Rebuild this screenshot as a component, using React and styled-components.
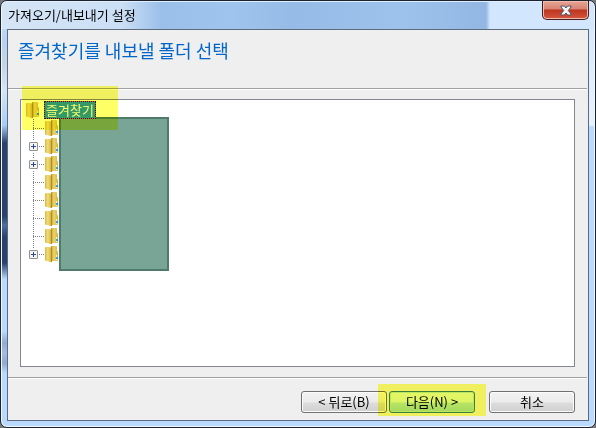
import styled, { createGlobalStyle } from "styled-components";

const GlobalStyle = createGlobalStyle`
  * {
    box-sizing: border-box;
  }
  body {
    margin: 0;
    background: #77777c;
    font-family: "Noto Sans CJK KR", "Liberation Sans", sans-serif;
    font-size: 12px;
    color: #000;
  }
`;

const Window = styled.div`
  display: flex;
  flex-direction: column;
  min-height: 100vh;
  padding: 0 6px 6px;
  border: 1px solid #1d2230;
  border-radius: 7px;
  box-shadow: inset 0 0 0 1px #f0f8ff;
  background:
    linear-gradient(
        #cfe3fa 0,
        #b5d3f5 40px,
        #c6d3e4 62px,
        #d5e4f6 90px,
        #a9cdf6 124px,
        #27426e 142px,
        #27426e 215px,
        #4f6f9e 224px,
        #27426e 236px,
        #27426e 262px,
        #b9dafd 278px,
        #b9dafd 330px,
        #8fabd0 342px,
        #a2bfe2 352px,
        #8fabd0 362px,
        #b9dafd 372px
      )
      left / 6px 100% no-repeat,
    linear-gradient(#d2e7fd 0, #e8f2fe 124px, #b9dafd 126px) right / 6px 100%
      no-repeat,
    #b9dafd;
`;

const TitleBar = styled.header`
  display: flex;
  justify-content: space-between;
  align-items: flex-start;
  height: 28px;
  margin: 0 -5px;
  padding-left: 6px;
  background: linear-gradient(
    90deg,
    #d5e5f6 0,
    #cbdff5 120px,
    #9abfe9 160px,
    #9fc5ee 230px,
    #96bbe6 290px,
    #9dc3ed 400px,
    #93b7e2 484px,
    #d2e7fd 488px
  );
  border-top: 1px solid #e2effd;
  border-radius: 6px 6px 0 0;
`;

const Title = styled.h1`
  margin: 0;
  font-size: 13px;
  font-weight: normal;
  line-height: 26px;
`;

const CloseButton = styled.button`
  display: flex;
  justify-content: center;
  align-items: center;
  width: 47px;
  height: 19px;
  margin: -1px 5px 0 0;
  padding: 0;
  border: 1px solid #481d20;
  border-top: 0;
  border-radius: 0 0 5px 5px;
  box-shadow: inset 0 0 0 1px #efbcae;
  background: linear-gradient(#e6a594 0, #d98373 8px, #bd3420 9px, #d4573f 100%);
`;

const Dialog = styled.main`
  flex: 1;
  display: flex;
  flex-direction: column;
  border: 1px solid #5c6b7e;
  background: #efefef;
`;

const Heading = styled.h2`
  height: 59px;
  margin: 0 1px 0 0;
  padding-left: 10px;
  border-bottom: 1px solid #a0a0a0;
  box-shadow: 0 1px #fff;
  color: #0066cc;
  font-size: 18px;
  font-weight: normal;
  line-height: 40px;
`;

const TreeBox = styled.div`
  position: relative;
  flex: 1;
  margin: 10px 13px 10px 12px;
  padding-top: 1px;
  border: 1px solid #828790;
  background: #fff;
`;

const Tree = styled.ul`
  margin: 0;
  padding: 0;
  list-style: none;
`;

const Row = styled.div`
  display: flex;
  align-items: center;
  height: 18px;
  padding-left: ${(props) => (props.$root ? "5px" : "0")};
  gap: ${(props) => (props.$root ? "5px" : "0")};
`;

const Branch = styled.span`
  display: flex;
  align-items: center;
  width: 24px;
  height: 18px;
  padding-left: 8px;
  background:
    repeating-linear-gradient(#808080 0 1px, transparent 1px 2px) 12px 0 / 1px
      ${(props) => (props.$last ? "9px" : "18px")} no-repeat,
    repeating-linear-gradient(90deg, #808080 0 1px, transparent 1px 2px) 12px
      9px / 12px 1px no-repeat;
`;

const Expander = styled.button`
  display: flex;
  width: 9px;
  height: 9px;
  padding: 0;
  border: 1px solid #919191;
  border-radius: 1px;
  background: #f4f4f4;
  box-shadow: 0 0 0 1px #fff;
`;

/* stays above the marker so the selection keeps its own green */
const RootLabel = styled.span`
  position: relative;
  z-index: 1;
  height: 18px;
  padding: 0 1px;
  border: 1px dotted #10221a;
  background:
    linear-gradient(#339966, #339966) padding-box,
    #cc6633;
  color: #f6fa70;
  font-size: 13px;
  line-height: 16px;
`;

const Cover = styled.div`
  position: absolute;
  top: 17px;
  left: 38px;
  width: 110px;
  height: 154px;
  border: 2px solid #507b6b;
  background: #78a595;
`;

const Highlight = styled.div`
  position: absolute;
  background: #ffff66;
  mix-blend-mode: multiply;
  pointer-events: none;
`;

const RootHighlight = styled(Highlight)`
  top: -14px;
  left: 1px;
  width: 96px;
  height: 44px;
`;

const NextHighlight = styled(Highlight)`
  top: -7px;
  left: -11px;
  width: 108px;
  height: 32px;
`;

const Footer = styled.footer`
  display: flex;
  justify-content: flex-end;
  height: 43px;
  margin-right: 1px;
  padding: 13px 12px 0 0;
  border-top: 1px solid #a0a0a0;
  box-shadow: inset 0 1px #fff;
`;

const ButtonSlot = styled.div`
  position: relative;
  margin-left: ${(props) => props.$gap};
`;

const Button = styled.button`
  display: block;
  width: 86px;
  height: 22px;
  padding: 0;
  border: 1px solid ${(props) => (props.$primary ? "#3c7f8c" : "#707070")};
  border-radius: 3px;
  box-shadow: inset 0 0 0 1px ${(props) => (props.$primary ? "#b8e8e8" : "#fcfcfc")};
  background: ${(props) =>
    props.$primary
      ? "linear-gradient(#e6f6ff 0, #dcf4fa 10px, #b8e4f4 11px, #a4d8f0 100%)"
      : "linear-gradient(#f2f2f2 0, #ebebeb 10px, #dddddd 11px, #cfcfcf 100%)"};
  font-family: inherit;
  font-size: 13px;
  line-height: 18px;
  color: #000;
`;

const FolderIcon = () => (
  <svg width="13" height="16" viewBox="0 0 13 16" aria-hidden="true">
    <defs>
      <linearGradient id="folderFront">
        <stop offset="0" stopColor="#d9b83e" />
        <stop offset="0.4" stopColor="#f1de7c" />
        <stop offset="1" stopColor="#cda92f" />
      </linearGradient>
      <linearGradient id="folderBack">
        <stop offset="0" stopColor="#b8942a" />
        <stop offset="0.4" stopColor="#ecd56c" />
        <stop offset="1" stopColor="#d3b23e" />
      </linearGradient>
    </defs>
    <path d="M6 0h5.500l.5 1v4l1 .5V14l-1 1H6z" fill="url(#folderBack)" />
    <path d="M0 1.500 1 1h4l2 1.500V16H5.500L0 14.500z" fill="url(#folderFront)" />
    <path d="M6 2h1v14H6z" fill="#b08c22" />
    <path d="M11 9h1v5h-1z" fill="#e8f4fa" />
    <path d="M11 11h2v2h-2z" fill="#3aa0dc" />
  </svg>
);

const PlusIcon = () => (
  <svg width="7" height="7" viewBox="0 0 7 7" aria-hidden="true">
    <path d="M1 3h5v1H1zM3 1h1v5H3z" fill="#2b4a94" />
  </svg>
);

const CloseIcon = () => (
  <svg width="12" height="11" viewBox="0 0 12 11" aria-hidden="true">
    <path
      d="M1 1h3.400L6 3l1.600-2H11v1L8.300 5.500 11 9v1H7.600L6 8l-1.600 2H1V9l2.700-3.500L1 2z"
      fill="#f4f4f4"
      stroke="#4b5468"
    />
  </svg>
);

const folders = [
  { id: 1 },
  { id: 2, expandable: true },
  { id: 3, expandable: true },
  { id: 4 },
  { id: 5 },
  { id: 6 },
  { id: 7 },
  { id: 8, expandable: true },
];

function App() {
  return (
    <>
      <GlobalStyle />
      <Window>
        <TitleBar>
          <Title>가져오기/내보내기 설정</Title>
          <CloseButton type="button" aria-label="닫기">
            <CloseIcon />
          </CloseButton>
        </TitleBar>
        <Dialog>
          <Heading>즐겨찾기를 내보낼 폴더 선택</Heading>
          <TreeBox>
            <Tree>
              <li>
                <Row $root>
                  <FolderIcon />
                  <RootLabel>즐겨찾기</RootLabel>
                </Row>
                <Tree>
                  {folders.map((folder, index) => (
                    <li key={folder.id}>
                      <Row>
                        <Branch $last={index === folders.length - 1}>
                          {folder.expandable && (
                            <Expander type="button" aria-label="펼치기">
                              <PlusIcon />
                            </Expander>
                          )}
                        </Branch>
                        <FolderIcon />
                      </Row>
                    </li>
                  ))}
                </Tree>
              </li>
            </Tree>
            <Cover />
            <RootHighlight />
          </TreeBox>
          <Footer>
            <ButtonSlot>
              <Button type="button">&lt; 뒤로(B)</Button>
            </ButtonSlot>
            <ButtonSlot $gap="2px">
              <Button type="button" $primary>
                다음(N) &gt;
              </Button>
              <NextHighlight />
            </ButtonSlot>
            <ButtonSlot $gap="14px">
              <Button type="button">취소</Button>
            </ButtonSlot>
          </Footer>
        </Dialog>
      </Window>
    </>
  );
}

export default App;
